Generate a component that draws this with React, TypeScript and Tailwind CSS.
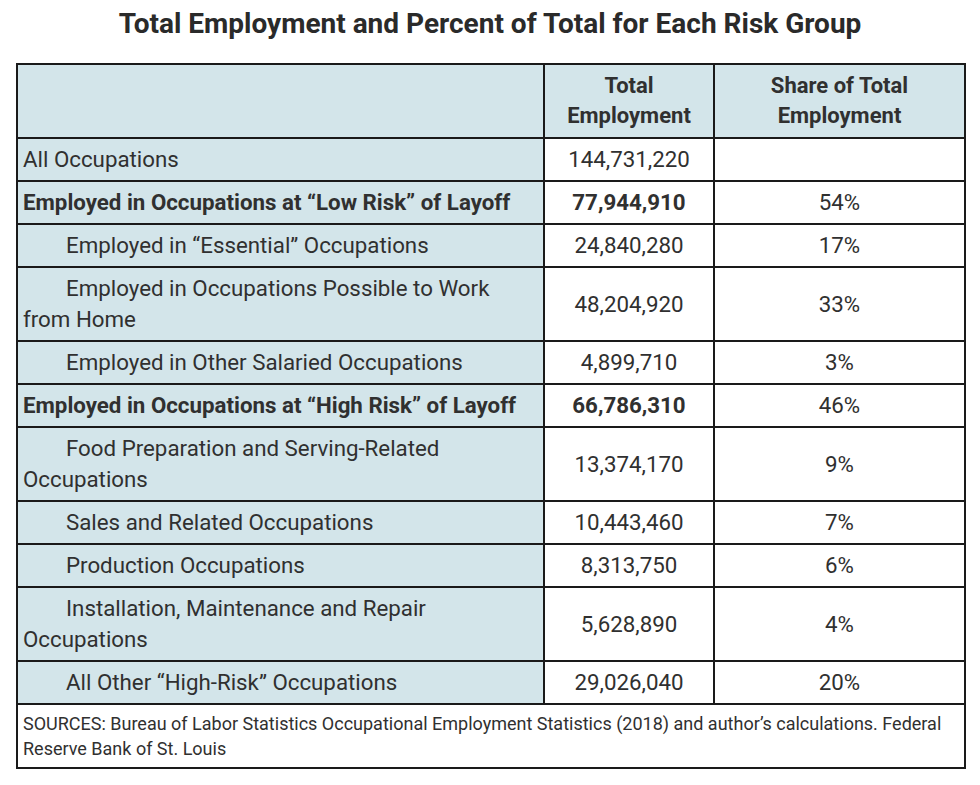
import React from 'react';

const rows = [
  { label: 'All Occupations', total: '144,731,220', share: '', bold: false, indent: false },
  { label: 'Employed in Occupations at “Low Risk” of Layoff', total: '77,944,910', share: '54%', bold: true, indent: false },
  { label: 'Employed in “Essential” Occupations', total: '24,840,280', share: '17%', bold: false, indent: true },
  { label: 'Employed in Occupations Possible to Work from Home', total: '48,204,920', share: '33%', bold: false, indent: true },
  { label: 'Employed in Other Salaried Occupations', total: '4,899,710', share: '3%', bold: false, indent: true },
  { label: 'Employed in Occupations at “High Risk” of Layoff', total: '66,786,310', share: '46%', bold: true, indent: false },
  { label: 'Food Preparation and Serving-Related Occupations', total: '13,374,170', share: '9%', bold: false, indent: true },
  { label: 'Sales and Related Occupations', total: '10,443,460', share: '7%', bold: false, indent: true },
  { label: 'Production Occupations', total: '8,313,750', share: '6%', bold: false, indent: true },
  { label: 'Installation, Maintenance and Repair Occupations', total: '5,628,890', share: '4%', bold: false, indent: true },
  { label: 'All Other “High-Risk” Occupations', total: '29,026,040', share: '20%', bold: false, indent: true },
];

export default function App() {
  return (
    <div className="w-[980px] h-[785px] bg-white text-[#303030] font-['Roboto',sans-serif]">
      <h1 className="pt-[6px] h-[63px] text-center text-[28px] font-bold leading-[36px] text-[#2a2a2a]">
        Total Employment and Percent of Total for Each Risk Group
      </h1>
      <table className="ml-[16px] w-[948px] border-collapse border-2 border-[#1a1a1a] table-fixed">
        <colgroup>
          <col className="w-[527px]" />
          <col className="w-[170px]" />
          <col className="w-[251px]" />
        </colgroup>
        <thead>
          <tr className="bg-[#d3e5ea] h-[74px]">
            <th className="border-2 border-[#1a1a1a]"></th>
            <th className="border-2 border-[#1a1a1a] text-[22px] font-bold leading-[30px] text-center">
              Total<br />Employment
            </th>
            <th className="border-2 border-[#1a1a1a] text-[22px] font-bold leading-[30px] text-center">
              Share of Total<br />Employment
            </th>
          </tr>
        </thead>
        <tbody>
          {rows.map((r, i) => (
            <tr key={i} className="text-[22.3px] leading-[31px]">
              <td
                className={`border-2 border-[#1a1a1a] bg-[#d3e5ea] pl-[5px] pr-[14px] py-[5px] ${r.bold ? 'font-bold' : ''} ${r.indent ? 'indent-[43px]' : ''}`}
              >
                {r.label}
              </td>
              <td className={`border-2 border-[#1a1a1a] text-center py-[5px] ${r.bold ? 'font-bold' : ''}`}>{r.total}</td>
              <td className="border-2 border-[#1a1a1a] text-center py-[5px]">{r.share}</td>
            </tr>
          ))}
          <tr>
            <td colSpan={3} className="border-2 border-[#1a1a1a] px-[5px] pt-[6px] pb-[6px] text-[18px] leading-[25px]">
              SOURCES: Bureau of Labor Statistics Occupational Employment Statistics (2018) and author’s calculations. Federal Reserve Bank of St. Louis
            </td>
          </tr>
        </tbody>
      </table>
    </div>
  );
}
